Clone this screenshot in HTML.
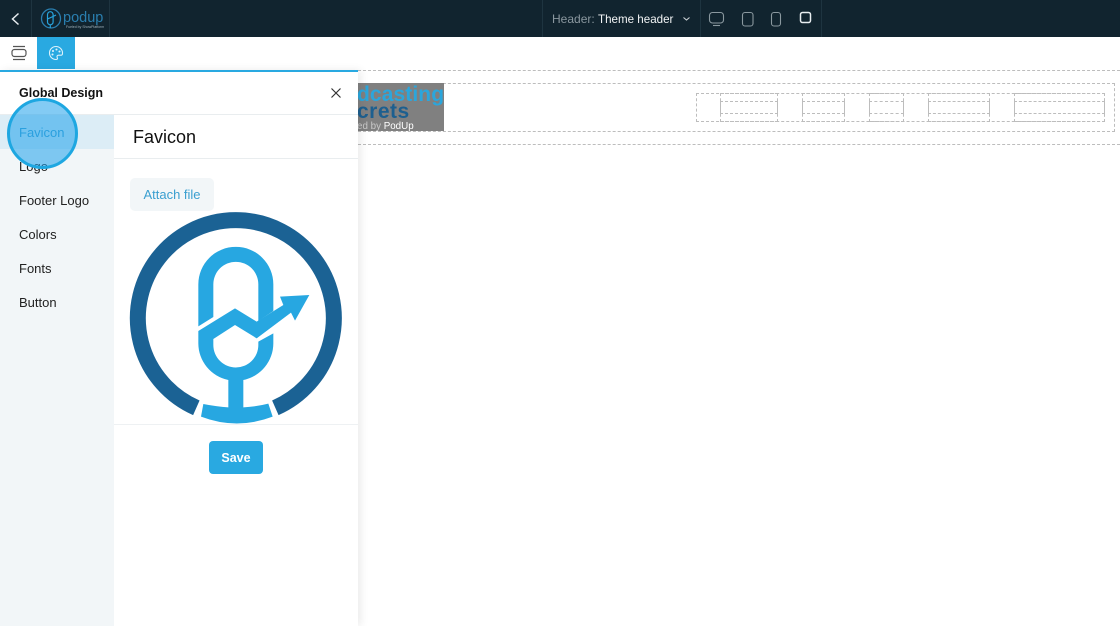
<!DOCTYPE html>
<html><head><meta charset="utf-8"><style>
html,body{margin:0;padding:0;width:1120px;height:626px;overflow:hidden;background:#fff;font-family:"Liberation Sans",sans-serif}
.a{position:absolute;white-space:nowrap;box-sizing:border-box}
.d{position:absolute;box-sizing:border-box;border:1px dashed #bdbdbd}
.m{position:absolute;left:19px;font-size:13px;color:#222;line-height:16px}
</style></head><body>
<div class="a" style="left:0;top:0;width:1120px;height:37px;background:#11242f"></div>
<div class="a" style="left:31px;top:0;width:1px;height:37px;background:#1e3440"></div>
<div class="a" style="left:109px;top:0;width:1px;height:37px;background:#1e3440"></div>
<div class="a" style="left:542px;top:0;width:1px;height:37px;background:#1e3440"></div>
<div class="a" style="left:700px;top:0;width:1px;height:37px;background:#1e3440"></div>
<div class="a" style="left:821px;top:0;width:1px;height:37px;background:#1e3440"></div>
<svg class="a" style="left:0;top:0" width="110" height="37" viewBox="0 0 110 37" fill="none">
<path d="M18.500 13.500L12.500 19L18.500 24.500" stroke="#e8edf0" stroke-width="1.500"/>
<circle cx="51" cy="18.500" r="9.500" stroke="#2a7fb0" stroke-width="1.300"/>
<path d="M47.500 19V14.500a2.800 2.800 0 0 1 5.600 0V22a2.800 2.800 0 0 1-5.600 0V19L53 16.500L56 15M50.300 25V28" stroke="#27a3dc" stroke-width="1.200"/>
</svg>
<div class="a" style="left:63px;top:10px;font-size:14.500px;line-height:17px;color:#2a7fb0">podup</div>
<div class="a" style="left:66px;top:25px;font-size:3.500px;line-height:5px;color:#9fb0ba">Fueled by ShowPlatform</div>
<div class="a" style="left:552px;top:12px;font-size:12px;line-height:15px;color:#8a979f">Header:</div>
<div class="a" style="left:598px;top:12px;font-size:11.600px;line-height:15px;color:#f2f4f5">Theme header</div>
<svg class="a" style="left:680px;top:15px" width="12" height="8" viewBox="0 0 12 8" fill="none" stroke="#c9d0d4" stroke-width="1.100"><path d="M3.500 2.500L6.500 5L9.500 2.500"/></svg>
<svg class="a" style="left:700px;top:0" width="122" height="37" viewBox="0 0 122 37" fill="none" stroke="#8a989f">
<rect x="9.500" y="12.500" width="14" height="10.500" rx="3" stroke-width="1.100"/><path d="M13 25.500h7" stroke-width="1.100"/>
<rect x="42.500" y="12.500" width="10.500" height="13.500" rx="2.500" stroke-width="1.100"/>
<rect x="71.500" y="12.500" width="9" height="13.500" rx="2.500" stroke-width="1.100"/>
<rect x="100.500" y="12.500" width="10" height="10" rx="2" stroke="#e8edf0" stroke-width="1.500"/>
</svg>

<svg class="a" style="left:0;top:37px" width="38" height="33" viewBox="0 0 38 33" fill="none" stroke="#555">
<path d="M13 9.500h12M13 22.500h12" stroke-width="1.200"/><rect x="12" y="12.500" width="14" height="7" rx="2.500" stroke-width="1.200"/>
</svg>
<div class="a" style="left:37px;top:37px;width:38px;height:32px;background:#29a9e1"></div>
<svg class="a" style="left:37px;top:37px" width="38" height="32" viewBox="0 0 38 32" fill="none" stroke="#dff2fb" stroke-width="1.100">
<path d="M19 9.500a6.500 6.500 0 1 0 0 13c1.500 0 1.800-1 1.200-2c-.6-1.200 0-2.300 1.500-2.300h2.200c1 0 1.600-.8 1.600-2a6.500 6.500 0 0 0-6.500-6.700z"/>
<circle cx="16" cy="14" r=".5"/><circle cx="19.500" cy="12.500" r=".5"/><circle cx="22.500" cy="14.500" r=".5"/><circle cx="15.500" cy="17.500" r=".5"/>
</svg>

<div class="d" style="left:358px;top:70px;width:762px;height:75px;border-left:0;border-right:0"></div>
<div class="d" style="left:358px;top:83px;width:757px;height:49px;border-left:0"></div>
<div class="d" style="left:696px;top:93px;width:409px;height:29px"></div>
<div class="d" style="left:720px;top:93px;width:58px;height:29px"></div>
<div class="d" style="left:720px;top:101px;width:58px;height:13px"></div>
<div class="d" style="left:802px;top:93px;width:43px;height:29px"></div>
<div class="d" style="left:802px;top:101px;width:43px;height:13px"></div>
<div class="d" style="left:869px;top:93px;width:35px;height:29px"></div>
<div class="d" style="left:869px;top:101px;width:35px;height:13px"></div>
<div class="d" style="left:928px;top:93px;width:62px;height:29px"></div>
<div class="d" style="left:928px;top:101px;width:62px;height:13px"></div>
<div class="d" style="left:1014px;top:93px;width:91px;height:29px"></div>
<div class="d" style="left:1014px;top:101px;width:91px;height:13px"></div>

<div class="a" style="left:358px;top:83px;width:86px;height:48px;background:#808080;overflow:hidden">
<div class="a" style="left:-1px;top:0;font-size:21px;line-height:24px;font-weight:bold;letter-spacing:.1px;color:#2ba6dc">dcasting</div>
<div class="a" style="left:-1px;top:17px;font-size:21px;line-height:24px;font-weight:bold;letter-spacing:.5px;color:#1d5f8f">crets</div>
<div class="a" style="left:-1px;top:38px;font-size:9.800px;line-height:11px;color:#c9c9c9">ed by <span style="color:#fff">PodUp</span></div>
</div>

<div class="a" style="left:0;top:70px;width:358px;height:556px;background:#fff;border-top:2px solid #29a9e1;box-shadow:3px 0 8px rgba(0,0,0,.08)"></div>
<div class="a" style="left:0;top:115px;width:114px;height:511px;background:#f2f6f8"></div>
<div class="a" style="left:0;top:114px;width:358px;height:1px;background:#e9edef"></div>
<div class="a" style="left:0;top:115px;width:114px;height:34px;background:#dcedf6"></div>
<div class="a" style="left:19px;top:85px;font-size:12.500px;line-height:17px;font-weight:bold;color:#111">Global Design</div>
<svg class="a" style="left:330px;top:87px" width="12" height="12" viewBox="0 0 12 12" stroke="#333" stroke-width="1.200"><path d="M1.500 1.500L10.500 10.500M10.500 1.500L1.500 10.500"/></svg>

<div class="m" style="top:125px;color:#3a9fd0">Favicon</div>
<div class="m" style="top:159px">Logo</div>
<div class="m" style="top:193px">Footer Logo</div>
<div class="m" style="top:227px">Colors</div>
<div class="m" style="top:261px">Fonts</div>
<div class="m" style="top:295px">Button</div>

<div class="a" style="left:133px;top:125px;font-size:18px;line-height:24px;color:#111">Favicon</div>
<div class="a" style="left:114px;top:158px;width:244px;height:1px;background:#e9edef"></div>
<div class="a" style="left:130px;top:178px;width:84px;height:33px;background:#f2f6f8;border-radius:5px;text-align:center;font-size:13px;line-height:33px;color:#3a9fd0">Attach file</div>

<svg class="a" style="left:120px;top:205px" width="235" height="225" viewBox="0 0 705 675">
<path d="M229 608.500A294 294 0 1 1 466 608.500" fill="none" stroke="#1b6294" stroke-width="48"/>
<g fill="#27a7e1">
<path d="M235 364V238A112.500 112.500 0 0 1 460 238V318L415 348V238A67.500 67.500 0 0 0 280 238V336Z"/>
<path d="M235 378L345 310L410 350L490 300L480 275L568 270L525 347L513 323L410 400L345 360L280 402V420A67.500 67.500 0 0 0 415 420V410L460 385V415A112.500 112.500 0 0 1 370 525V607Q410 605 445 596L458 635Q350 676 243 635L250 597Q290 605 325 607V525A112.500 112.500 0 0 1 235 415Z"/>
</g>
</svg>
<div class="a" style="left:114px;top:424px;width:244px;height:1px;background:#eef1f3"></div>
<div class="a" style="left:209px;top:441px;width:54px;height:33px;background:#29a9e1;border-radius:4px;text-align:center;font-size:12.500px;line-height:34px;font-weight:bold;color:#fff">Save</div>

<div class="a" style="left:7px;top:98px;width:71px;height:71px;border-radius:50%;border:3.500px solid #1ea7e1;background:rgba(30,160,235,.55)"></div>
</body></html>
